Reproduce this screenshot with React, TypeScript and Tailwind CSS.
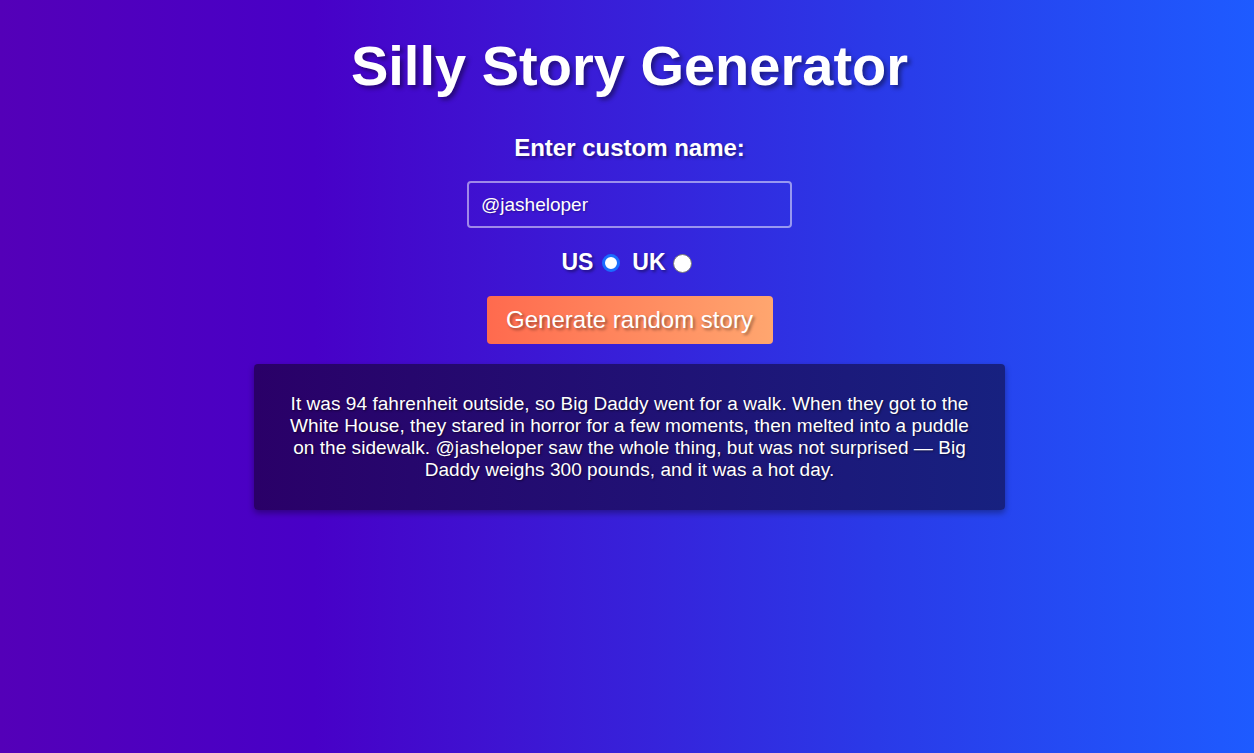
import React from "react";

export default function App() {
  return (
    <div
      className="min-h-[753px] w-full pl-[5px] bg-[linear-gradient(to_right,#5400b8_0%,#4800c7_25%,#2a3ae8_70%,#1e5bff_100%)] text-white flex flex-col items-center"
      style={{ fontFamily: "Helvetica, 'Liberation Sans', Arial, sans-serif" }}
    >
      <h1 className="mt-[30px] text-[56px] leading-[72px] font-bold [text-shadow:3px_3px_4px_rgba(0,0,0,0.4)]">
        Silly Story Generator
      </h1>
      <label className="mt-[32px] text-[24px] leading-[28px] font-bold [text-shadow:2px_2px_3px_rgba(0,0,0,0.4)]">
        Enter custom name:
      </label>
      <input
        defaultValue="@jasheloper"
        className="mt-[19px] w-[325px] h-[47px] rounded-[4px] border-2 border-[rgba(255,255,255,0.5)] bg-transparent px-[12px] text-[19px] text-white outline-none [text-shadow:1px_1px_2px_rgba(0,0,0,0.3)]"
      />
      <div className="mt-[20px] mr-[6px] flex items-center text-[23px] leading-[28px] font-bold [text-shadow:2px_2px_3px_rgba(0,0,0,0.4)]">
        <span>US</span>
        <span className="ml-[9px] mt-[2px] w-[18px] h-[18px] rounded-full bg-white border-[3px] border-[#1a6cff]" />
        <span className="ml-[12px]">UK</span>
        <span className="ml-[7px] mt-[2px] w-[19px] h-[19px] rounded-full bg-white border-[1.5px] border-[#777]" />
      </div>
      <button className="mt-[20px] w-[286px] h-[48px] rounded-[4px] bg-[linear-gradient(to_right,#ff6a4e,#ffa66f)] text-[24px] text-white [text-shadow:2px_2px_3px_rgba(0,0,0,0.4)]">
        Generate random story
      </button>
      <div className="mt-[20px] w-[751px] rounded-[4px] bg-[linear-gradient(to_right,#2a0068,#172180)] px-[30px] py-[29px] shadow-[0_3px_6px_rgba(0,0,0,0.35)]">
        <p className="text-center text-[19px] leading-[22px] tracking-[0.05px] [text-shadow:1px_1px_2px_rgba(0,0,0,0.5)]">
          It was 94 fahrenheit outside, so Big Daddy went for a walk. When they got to the White House, they stared in horror for a few moments, then melted into a puddle on the sidewalk. @jasheloper saw the whole thing, but was not surprised — Big Daddy weighs 300 pounds, and it was a hot day.
        </p>
      </div>
    </div>
  );
}
